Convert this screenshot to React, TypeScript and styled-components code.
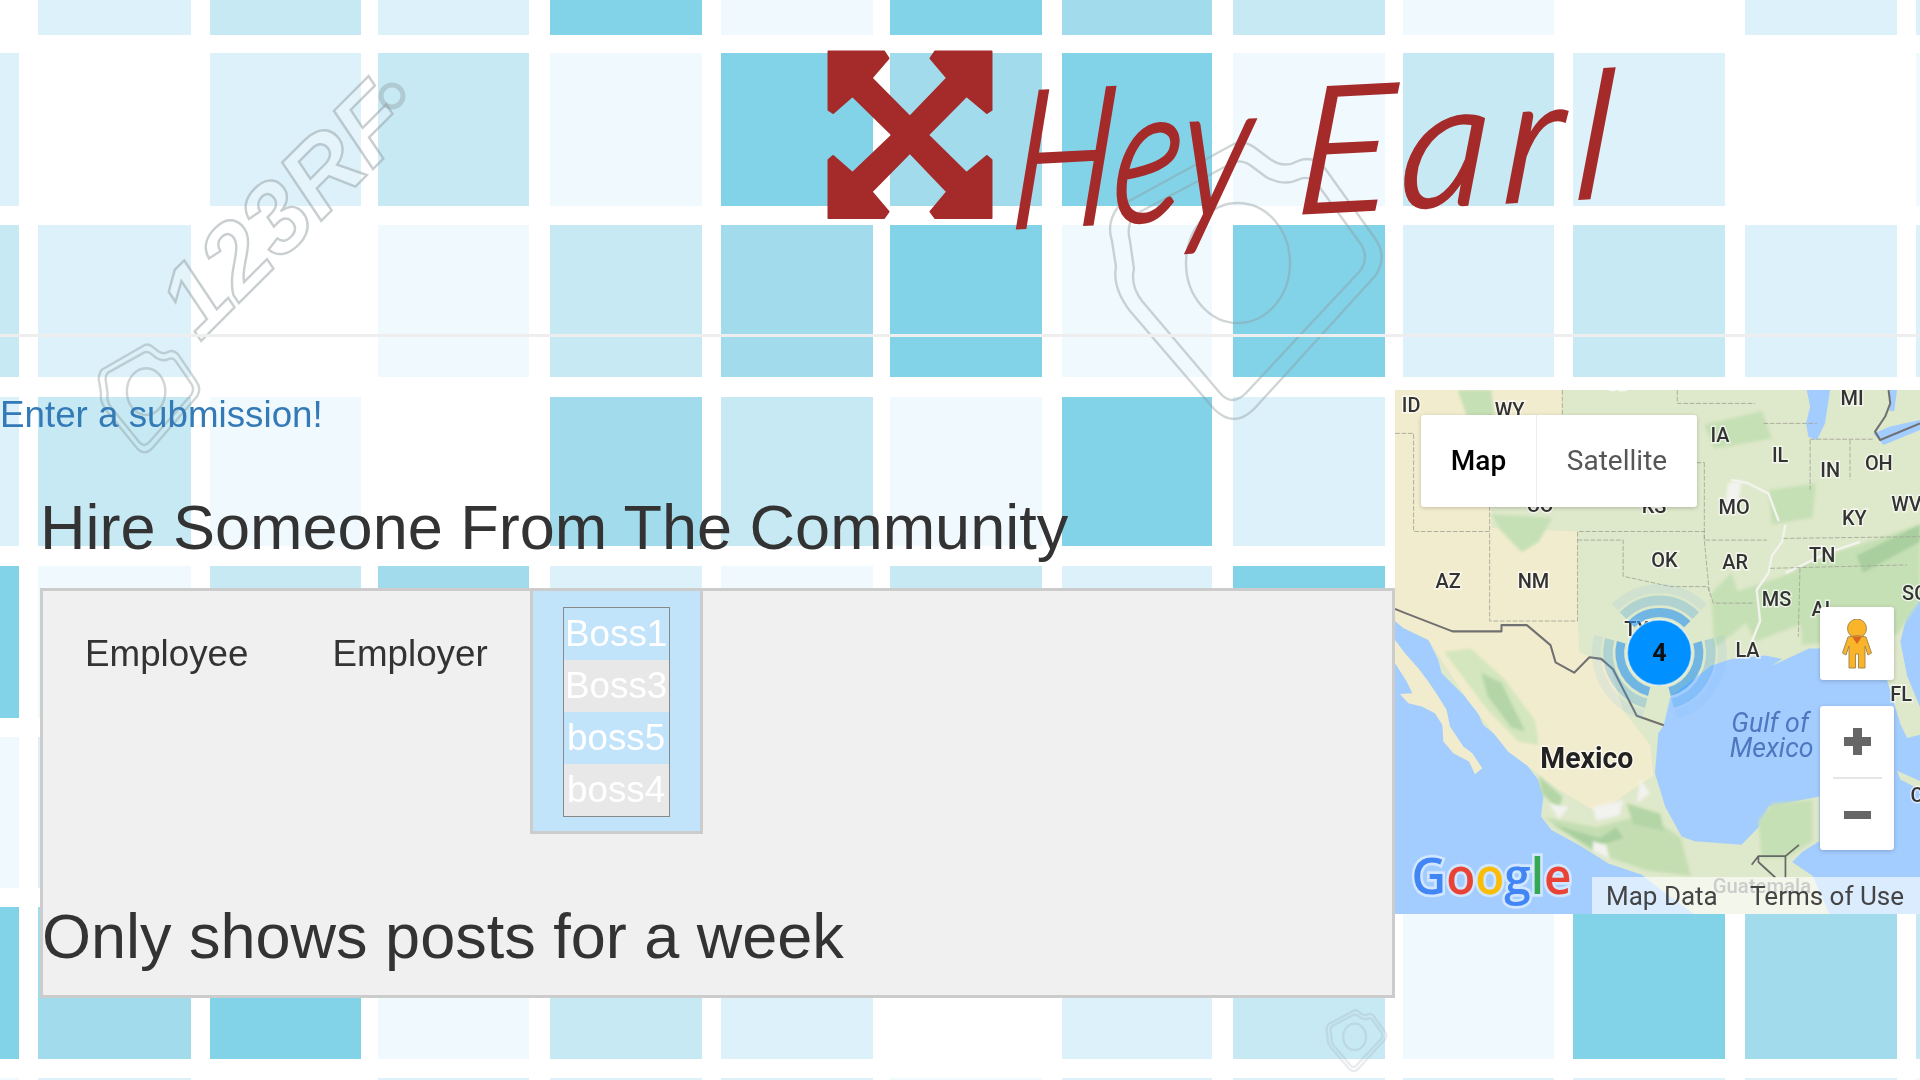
import React from 'react'
import styled, { createGlobalStyle } from 'styled-components'

const GlobalStyle = createGlobalStyle`
  html { background: #fff; }
  html, body { margin: 0; padding: 0; }
  body { font-family: "Liberation Sans", Arial, sans-serif; color: #333; overflow: hidden; }
`

const shades = ['#ffffff', '#f0f9fd', '#dcf1fa', '#c7e9f4', '#a2dcec', '#82d3e8']
const colEdges = [[-20, 19], [38, 191], [210, 361], [378, 529], [550, 702], [721, 873], [890, 1042], [1062, 1212], [1233, 1385], [1403, 1554], [1573, 1725], [1745, 1897], [1916, 1930]]
const rowEdges = [[-10, 35], [53, 206], [225, 377], [397, 546], [566, 718], [737, 888], [907, 1059], [1078, 1090]]
const tileMap = [
  [0, 2, 3, 2, 5, 1, 5, 4, 3, 1, 0, 2, 2],
  [2, 0, 2, 3, 1, 5, 4, 5, 1, 3, 2, 0, 1],
  [3, 2, 0, 1, 3, 4, 5, 1, 5, 2, 3, 2, 2],
  [2, 3, 1, 0, 4, 3, 1, 5, 2, 2, 2, 2, 2],
  [5, 1, 3, 4, 2, 1, 3, 2, 5, 2, 2, 2, 2],
  [1, 2, 2, 2, 2, 2, 2, 2, 2, 2, 2, 2, 2],
  [5, 4, 5, 1, 3, 2, 0, 2, 3, 1, 5, 4, 3],
  [1, 2, 0, 2, 2, 2, 1, 2, 2, 2, 2, 2, 1],
]

const BackdropSvg = styled.svg`
  position: fixed;
  inset: 0;
  z-index: -1;
`

const CameraMark = ({ transform, faint }: { transform: string; faint?: boolean }) => (
  <g transform={transform} fill="none" stroke="#8f9a9e" strokeOpacity={faint ? 0.2 : 0.42} strokeWidth="2.4" strokeLinejoin="round">
    <path vectorEffect="non-scaling-stroke" d="M124 4 Q134 -2 146 6 L162 18 Q176 28 190 20 Q204 14 216 26 L266 96 Q280 114 268 134 L146 268 Q126 288 106 268 L22 170 Q4 146 8 126 L4 100 Q-2 82 10 66 Z" />
    <path vectorEffect="non-scaling-stroke" d="M124 22 Q132 18 142 24 L158 36 Q176 46 192 38 Q202 34 210 44 L252 102 Q262 116 252 130 L138 252 Q124 266 112 252 L34 160 Q22 144 26 128 L22 100 Q18 86 26 74 Z" />
    <ellipse vectorEffect="non-scaling-stroke" cx="130" cy="122" rx="52" ry="60" />
  </g>
)

const Backdrop = () => (
  <BackdropSvg width="1920" height="1080" viewBox="0 0 1920 1080">
    {tileMap.map((row, r) =>
      row.map((level, c) => (
        <rect
          key={`${r}-${c}`}
          x={colEdges[c][0]}
          y={rowEdges[r][0]}
          width={colEdges[c][1] - colEdges[c][0]}
          height={rowEdges[r][1] - rowEdges[r][0]}
          fill={shades[level]}
        />
      )),
    )}
    <text
      x="0"
      y="0"
      transform="translate(200 342) rotate(-45)"
      fontFamily="'Liberation Sans', sans-serif"
      fontWeight="700"
      fontStyle="italic"
      fontSize="100"
      textLength="305"
      lengthAdjust="spacingAndGlyphs"
      fill="#ffffff"
      fillOpacity="0.25"
      stroke="#8f9a9e"
      strokeOpacity="0.48"
      strokeWidth="2.4"
    >
      123RF
    </text>
    <circle cx="392" cy="96" r="11" fill="none" stroke="#8f9a9e" strokeOpacity="0.4" strokeWidth="5" />
    <CameraMark transform="translate(98 344) scale(0.37 0.39)" />
    <CameraMark transform="translate(1108 141)" />
    <CameraMark transform="translate(1326 1010) scale(0.22)" faint />
  </BackdropSvg>
)

const Page = styled.div`
  width: 1920px;
  height: 1080px;
  overflow: hidden;
`

const Header = styled.header`
  height: 334px;
  box-sizing: border-box;
  padding: 50px 0 0 825px;
  display: flex;
  align-items: flex-start;
`

const BrandIcon = styled.svg`
  flex: none;
  display: block;
`

const BrandName = styled.span`
  display: block;
  margin: 14px 0 0 12px;
  font-family: "Lato", sans-serif;
  font-style: italic;
  font-weight: 300;
  font-size: 190px;
  line-height: 180px;
  white-space: nowrap;
  color: #a52a2a;
  -webkit-text-stroke: 4px #a52a2a;
  transform: rotate(-3deg) skewX(-7deg) scaleX(0.78);
  transform-origin: left bottom;
`

const BrandTail = styled.span`
  display: inline-block;
  margin-left: 16px;
  font-size: 174px;
  letter-spacing: 14px;
  transform: scaleX(1.3);
  transform-origin: left bottom;
`

const Rule = styled.hr`
  height: 3px;
  margin: 0 0 53px;
  border: 0;
  background: #eee;
`

const Main = styled.main`
  display: grid;
  grid-template-columns: 1395px 525px;
  align-items: start;
`

const LeftColumn = styled.section`
  min-width: 0;
`

const SubmitLink = styled.a`
  display: block;
  height: 50px;
  font-size: 36.75px;
  line-height: 50px;
  color: #337ab7;
  text-decoration: none;
`

const Title = styled.h1`
  margin: 53px 0 0 40px;
  font-size: 63px;
  font-weight: 400;
  line-height: 69px;
  color: #333;
`

const Panel = styled.div`
  margin: 26px 0 0 40px;
  height: 410px;
  box-sizing: border-box;
  border: 3px solid #ccc;
  background: #f0f0f0;
  display: flex;
  flex-direction: column;
  justify-content: space-between;
`

const TabRow = styled.div`
  display: flex;
  align-items: flex-start;
`

const Tab = styled.div`
  padding: 42px 42px 0;
  font-size: 36.75px;
  line-height: 42px;
  color: #333;
`

const ActiveTab = styled.div`
  box-sizing: border-box;
  width: 173px;
  height: 246px;
  margin-top: -3px;
  padding: 16px 30px;
  border: 3px solid #ccc;
  background: #c2e4fa;
`

const BossList = styled.ul`
  width: 107px;
  box-sizing: border-box;
  margin: 0;
  padding: 0;
  list-style: none;
  border: 1px solid #888;
`

const BossItem = styled.li<{ $shaded: boolean }>`
  height: 52px;
  font-size: 36.75px;
  line-height: 52px;
  text-align: center;
  color: #fff;
  background: ${props => (props.$shaded ? '#e8e8e8' : '#c2e4fa')};
`

const Note = styled.h2`
  margin: 0 0 24px -1px;
  font-size: 63px;
  font-weight: 400;
  line-height: 69px;
  color: #333;
`

const MapFrame = styled.aside`
  position: relative;
  width: 525px;
  height: 524px;
  overflow: hidden;
  font-family: "Roboto", sans-serif;
`

const MapArt = styled.svg`
  display: block;
`

const MapTypeControl = styled.div`
  position: absolute;
  left: 26px;
  top: 25px;
  display: flex;
  height: 92px;
  border-radius: 3px;
  overflow: hidden;
  background: #fff;
  box-shadow: 0 1px 4px rgba(0, 0, 0, 0.2);
`

const MapTypeButton = styled.div<{ $active?: boolean }>`
  width: ${props => (props.$active ? '115px' : '161px')};
  box-sizing: border-box;
  text-align: center;
  font-size: 28px;
  line-height: 92px;
  font-weight: ${props => (props.$active ? 500 : 400)};
  color: ${props => (props.$active ? '#000' : '#565656')};
  border-left: ${props => (props.$active ? '0' : '1px solid #eee')};
`

const PegmanButton = styled.div`
  position: absolute;
  right: 26px;
  top: 217px;
  width: 74px;
  height: 73px;
  display: flex;
  align-items: center;
  justify-content: center;
  border-radius: 3px;
  background: #fff;
  box-shadow: 0 1px 4px rgba(0, 0, 0, 0.2);
`

const ZoomControl = styled.div`
  position: absolute;
  right: 26px;
  top: 316px;
  width: 74px;
  height: 144px;
  border-radius: 3px;
  background: #fff;
  box-shadow: 0 1px 4px rgba(0, 0, 0, 0.2);
  display: flex;
  flex-direction: column;
  align-items: center;
`

const ZoomButton = styled.div`
  height: 71px;
  display: flex;
  align-items: center;
  justify-content: center;
`

const ZoomDivider = styled.div`
  width: 49px;
  height: 2px;
  background: #e6e6e6;
`

const Attribution = styled.div`
  position: absolute;
  right: 0;
  bottom: 0;
  width: 328px;
  height: 37px;
  display: flex;
  align-items: center;
  justify-content: space-between;
  box-sizing: border-box;
  padding: 0 16px 0 14px;
  background: rgba(255, 255, 255, 0.62);
  font-size: 26px;
  color: #444;
  white-space: nowrap;
`

const labels: [string, number, number][] = [
  ['ID', 35, 92], ['WY', 310, 108], ['SD', 640, 30], ['MI', 1333, 72], ['IA', 948, 180], ['IL', 1130, 238],
  ['IN', 1273, 283], ['OH', 1405, 260], ['CO', 405, 382], ['KS', 745, 385], ['MO', 972, 390], ['KY', 1337, 422],
  ['WV', 1483, 380], ['OK', 773, 542], ['AR', 983, 550], ['TN', 1240, 530], ['AZ', 135, 603], ['NM', 378, 603],
  ['MS', 1100, 655], ['AL', 1247, 685], ['SC', 1515, 640], ['TX', 693, 745], ['LA', 1022, 805], ['FL', 1480, 932],
  ['C', 1540, 1225],
]

const polar = (r: number, deg: number) => {
  const a = (deg * Math.PI) / 180
  return `${797 + r * Math.cos(a)} ${792 + r * Math.sin(a)}`
}

const arcPath = (r: number, from: number, to: number) => `M${polar(r, from)} A${r} ${r} 0 0 1 ${polar(r, to)}`

const ClusterRings = () => (
  <g fill="none">
    {[-135, 105, -15].map(start => (
      <g key={start}>
        <path d={arcPath(117, start, start + 90)} stroke="#2f97f2" strokeOpacity="0.62" strokeWidth="26" />
        <path d={arcPath(152, start, start + 90)} stroke="#3b9fe8" strokeOpacity="0.28" strokeWidth="28" />
        <path d={arcPath(186, start, start + 90)} stroke="#6db6f5" strokeOpacity="0.12" strokeWidth="26" />
      </g>
    ))}
  </g>
)

const MapDrawing = () => (
  <MapArt width="525" height="524" viewBox="15 29 1553 1522" preserveAspectRatio="none">
    <defs>
      <filter id="soft" x="-10%" y="-10%" width="120%" height="120%">
        <feGaussianBlur stdDeviation="5" />
      </filter>
    </defs>
    <rect x="15" y="29" width="1553" height="1522" fill="#a3ccff" />
    <path
      fill="#dee8ca"
      d="M15 29 H1568 V640 L1530 680 L1510 760 L1530 860 L1568 950 V1030 L1530 1040 L1510 1000 L1470 870 L1420 800 L1330 780 L1240 780 L1130 830 L1160 810 L1110 800 L1010 810 L950 830 L830 920 L810 1003 L794 1026 L784 1142 L814 1239 L863 1326 L902 1340 L1040 1350 L1090 1300 L1120 1240 L1270 1210 V1340 L1220 1370 L1190 1400 L1250 1440 L1300 1551 H900 L800 1480 L745 1437 L646 1404 L567 1355 L478 1307 L447 1268 L454 1210 L439 1162 L390 1099 L330 1045 L276 1002 L252 949 L202 900 L153 852 L143 813 L114 755 L40 720 L15 700 Z"
    />
    {/* baja, in crop units */}
    <path
      fill="#f2ecce"
      transform="translate(15 755) scale(0.986 0.968)"
      d="M0 0 L30 40 L70 85 L100 125 L130 170 L155 210 L165 260 L205 320 L232 340 L262 385 L240 403 L222 365 L175 340 L145 305 L142 255 L120 220 L80 200 L40 190 L15 162 L52 160 L35 125 L0 70 Z"
    />
    <path
      fill="#f2ecce"
      d="M15 29 H510 V240 L300 250 V430 L555 440 V700 L560 790 L650 830 L690 960 L770 1060 L780 1150 L700 1200 L620 1260 L500 1190 L420 1130 L350 1080 L230 930 L114 755 L40 720 L15 700 Z"
    />
    <g filter="url(#soft)" fill="#c6e0b6">
      <path d="M200 29 L300 29 L310 110 L240 140 Z" />
      <path d="M300 390 L480 400 L440 470 L390 500 L330 440 Z" />
      <path d="M1010 620 L1220 550 L1240 700 L1080 760 Z" />
      <path d="M1120 320 L1260 300 L1250 400 L1130 420 Z" />
      <path d="M1200 540 L1568 420 V640 L1500 740 L1220 770 Z" />
      <path d="M930 130 L1100 90 L1130 170 L960 200 Z" />
      <path d="M950 620 L1010 560 L1060 700 L960 780 Z" />
      <path d="M1090 1280 L1130 1230 L1250 1220 L1250 1340 L1170 1390 L1100 1390 Z" />
      <path d="M1380 510 L1568 420 V470 L1400 560 Z" fill="#a9cf9e" />
      <path d="M160 790 L240 780 L340 870 L430 990 L440 1060 L380 1050 L290 960 Z" fill="#d3e6bd" />
      <path d="M270 850 L330 880 L400 1020 L360 1010 L290 920 Z" fill="#b4d5a5" />
      <path d="M440 1150 L510 1210 L500 1250 L450 1200 Z" fill="#b4d5a5" />
      <path d="M455 1270 L610 1300 L760 1260 L860 1330 L890 1440 L760 1425 L600 1370 Z" fill="#c4deb2" />
      <path d="M700 1230 L800 1260 L810 1310 L720 1290 Z" fill="#b4d5a5" />
      <path d="M480 1290 L620 1330 L670 1300 L690 1330 L600 1360 Z" fill="#a9cf9e" />
    </g>
    <g fill="#f2f2ee" filter="url(#soft)">
      <path d="M470 1230 L530 1240 L500 1275 Z" />
      <path d="M600 1240 L690 1220 L680 1265 L610 1280 Z" />
      <path d="M740 1160 L770 1200 L730 1230 Z" />
      <path d="M600 1340 L640 1350 L650 1390 L600 1370 Z" />
      <path d="M1000 300 L1040 290 L1030 370 L990 380 Z" />
    </g>
    <g fill="none" stroke="#f3f3ee" strokeWidth="7" strokeLinejoin="round">
      <path d="M1170 420 L1160 470 L1130 510 L1120 560 L1085 610 L1095 700 L1070 760" />
      <path d="M1010 290 L1060 300 L1120 330 L1150 410" />
      <path d="M1170 560 L1300 500 L1390 470" />
    </g>
    <g fill="#a3ccff">
      <path d="M1233 29 H1302 L1287 126 L1263 174 L1238 165 L1231 126 L1243 77 Z" />
      <path d="M1430 155 L1460 189 L1568 145 V116 L1480 135 Z" />
      <path d="M1478 29 H1500 L1492 90 L1478 90 Z" />
      <path d="M1500 1135 L1568 1165 V1190 L1510 1160 Z" fill="#dee8ca" />
    </g>
    <g fill="none" stroke="#a5a597" strokeWidth="2.5" strokeDasharray="14 5">
      <path d="M15 155 H70 V440 H295 V700 H555 V440 H930 V465 H1115" />
      <path d="M295 100 V440 M510 29 V240 H930 M850 29 V68 H1080" />
      <path d="M555 465 H690 V570 L830 600 H940 L957 648 H1075" />
      <path d="M930 240 V465 L945 620" />
      <path d="M1105 126 H1263 M1243 172 H1430 M1243 174 V319 M1361 174 V290" />
      <path d="M1164 460 L1568 455 M1125 547 L1529 537 M1213 547 L1208 745" />
    </g>
    <path
      d="M15 665 L40 675 L185 730 H330 V712 H405 L475 770 L490 820 L545 850 L590 805 L625 810 L660 840 L730 975 L810 1003"
      fill="none"
      stroke="#707070"
      strokeWidth="6"
      strokeLinejoin="round"
    />
    <path
      d="M1475 29 L1480 68 L1465 106 L1435 150 L1450 174 L1568 126"
      fill="none"
      stroke="#707070"
      strokeWidth="6"
      strokeLinejoin="round"
    />
    <path d="M1070 1408 L1090 1383 H1170 L1210 1350 M1170 1383 V1445 M1090 1383 V1400 L1140 1445" fill="none" stroke="#666" strokeWidth="5" />
    <g fontFamily="Roboto, sans-serif" fontWeight="500" fontSize="59" fill="#333" stroke="#fff" strokeOpacity="0.65" strokeWidth="8" paintOrder="stroke">
      {labels.map(([name, x, y]) => (
        <text key={name} x={x} y={y}>{name}</text>
      ))}
      <text x="445" y="1127" fontSize="84" fontWeight="700" fill="#222">Mexico</text>
      <text x="955" y="1490" fontSize="60" fill="#777" stroke="none">Guatemala</text>
    </g>
    <g fontFamily="Roboto, sans-serif" fontStyle="italic" fontSize="79" fill="#4d78c0">
      <text x="1010" y="1023">Gulf of</text>
      <text x="1005" y="1095">Mexico</text>
    </g>
    <ClusterRings />
    <circle cx="797" cy="792" r="95" fill="#0090ff" stroke="#fff" strokeOpacity="0.5" strokeWidth="5" />
    <text x="797" y="817" fontFamily="Roboto, sans-serif" fontSize="74" fontWeight="700" textAnchor="middle" fill="#111">4</text>
    <text
      x="64"
      y="1493"
      fontFamily="'Open Sans', sans-serif"
      fontSize="146"
      fontWeight="600"
      textLength="473"
      lengthAdjust="spacingAndGlyphs"
      stroke="#fff"
      strokeOpacity="0.5"
      strokeWidth="16"
      paintOrder="stroke"
    >
      <tspan fill="#4285f4">G</tspan>
      <tspan fill="#ea4335">o</tspan>
      <tspan fill="#fbbc05">o</tspan>
      <tspan fill="#4285f4">g</tspan>
      <tspan fill="#34a853">l</tspan>
      <tspan fill="#ea4335">e</tspan>
    </text>
  </MapArt>
)

const Pegman = () => (
  <svg width="30" height="50" viewBox="0 0 30 50">
    <circle cx="15" cy="9.5" r="9.5" fill="#f9b42a" stroke="#a58a50" strokeWidth="1" />
    <path
      d="M6 18 Q15 15 24 18 L29.5 34 L26 36 L23 27 V49 H16.5 V35 H13.5 V49 H7 V27 L4 36 L0.5 34 Z"
      fill="#f9b42a"
      stroke="#a58a50"
      strokeWidth="1"
      strokeLinejoin="round"
    />
    <path d="M10 17.5 H20 L15 25 Z" fill="#d9661f" />
  </svg>
)

const App: React.FC = () => {
  return (
    <Page>
      <GlobalStyle />
      <Backdrop />
      <Header>
        <BrandIcon width="170" height="170" viewBox="0 0 167 170">
          <path
            fill="#a52a2a"
            stroke="#a52a2a"
            strokeWidth="2"
            strokeLinejoin="round"
            d="M2 1.5 L57.6 1.5 L62 8.3 L45 28 L83.4 66.7 L120.7 28 L104 8.3 L108.6 1.5 L165 1.5 L165 60 L160.4 63 L140 46 L101.4 85 L140 123 L160.4 106 L165 110 L165 168 L108.6 168 L104 161.7 L120.7 141.7 L83.4 102.7 L45 141.7 L62 161.7 L57.6 168 L2 168 L2 110 L6.6 106 L26 123 L65.8 85 L26 46 L6.6 63 L2 60 Z"
          />
        </BrandIcon>
        <BrandName>Hey <BrandTail>Earl</BrandTail></BrandName>
      </Header>
      <Rule />
      <Main>
        <LeftColumn>
          <SubmitLink href="#submit">Enter a submission!</SubmitLink>
          <Title>Hire Someone From The Community</Title>
          <Panel>
            <TabRow>
              <Tab>Employee</Tab>
              <Tab>Employer</Tab>
              <ActiveTab>
                <BossList>
                  {['Boss1', 'Boss3', 'boss5', 'boss4'].map((name, i) => (
                    <BossItem key={name} $shaded={i % 2 === 1}>{name}</BossItem>
                  ))}
                </BossList>
              </ActiveTab>
            </TabRow>
            <Note>Only shows posts for a week</Note>
          </Panel>
        </LeftColumn>
        <MapFrame>
          <MapDrawing />
          <MapTypeControl>
            <MapTypeButton $active>Map</MapTypeButton>
            <MapTypeButton>Satellite</MapTypeButton>
          </MapTypeControl>
          <PegmanButton>
            <Pegman />
          </PegmanButton>
          <ZoomControl>
            <ZoomButton>
              <svg width="27" height="27" viewBox="0 0 27 27"><path d="M9 0 H18 V9 H27 V18 H18 V27 H9 V18 H0 V9 H9 Z" fill="#666" /></svg>
            </ZoomButton>
            <ZoomDivider />
            <ZoomButton>
              <svg width="27" height="8" viewBox="0 0 27 8"><rect width="27" height="8" fill="#666" /></svg>
            </ZoomButton>
          </ZoomControl>
          <Attribution>
            <span>Map Data</span>
            <span>Terms of Use</span>
          </Attribution>
        </MapFrame>
      </Main>
    </Page>
  )
}

export default App
